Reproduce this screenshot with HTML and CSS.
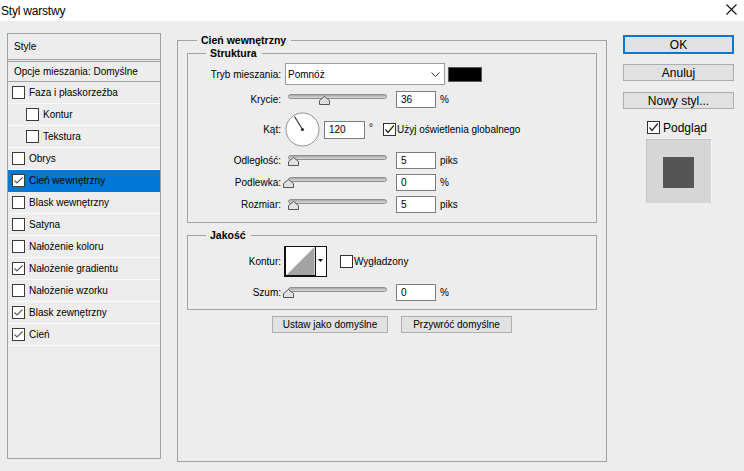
FILE: index.html
```html
<!DOCTYPE html>
<html lang="pl">
<head>
<meta charset="utf-8">
<title>Styl warstwy</title>
<link rel="stylesheet" href="styles.css">
</head>
<body>
<div class="titlebar">
  <span class="title">Styl warstwy</span>
  <svg class="close" width="11" height="11" viewBox="0 0 11 11"><path d="M0.5 0.5 L10.5 10.5 M10.5 0.5 L0.5 10.5" stroke="#111" stroke-width="1.1" fill="none"/></svg>
</div>
<div class="main">
  <aside class="styles-panel">
    <div class="sp-head">Style</div>
    <div class="sp-row sp-opts">Opcje mieszania: Domyślne</div>
    <div class="sp-row"><span class="cb"></span>Faza i płaskorzeźba</div>
    <div class="sp-row sub"><span class="cb"></span>Kontur</div>
    <div class="sp-row sub"><span class="cb"></span>Tekstura</div>
    <div class="sp-row"><span class="cb"></span>Obrys</div>
    <div class="sp-row sel"><span class="cb"><svg width="11" height="11" viewBox="0 0 11 11"><path d="M1.5 5.5 L4 8 L9.5 2.5" stroke="#5a5a5a" stroke-width="1.1" fill="none"/></svg></span>Cień wewnętrzny</div>
    <div class="sp-row"><span class="cb"></span>Blask wewnętrzny</div>
    <div class="sp-row"><span class="cb"></span>Satyna</div>
    <div class="sp-row"><span class="cb"></span>Nałożenie koloru</div>
    <div class="sp-row"><span class="cb"><svg width="11" height="11" viewBox="0 0 11 11"><path d="M1.5 5.5 L4 8 L9.5 2.5" stroke="#5a5a5a" stroke-width="1.1" fill="none"/></svg></span>Nałożenie gradientu</div>
    <div class="sp-row"><span class="cb"></span>Nałożenie wzorku</div>
    <div class="sp-row"><span class="cb"><svg width="11" height="11" viewBox="0 0 11 11"><path d="M1.5 5.5 L4 8 L9.5 2.5" stroke="#5a5a5a" stroke-width="1.1" fill="none"/></svg></span>Blask zewnętrzny</div>
    <div class="sp-row"><span class="cb"><svg width="11" height="11" viewBox="0 0 11 11"><path d="M1.5 5.5 L4 8 L9.5 2.5" stroke="#5a5a5a" stroke-width="1.1" fill="none"/></svg></span>Cień</div>
  </aside>

  <fieldset class="group outer">
    <legend>Cień wewnętrzny</legend>
    <fieldset class="group inner">
      <legend>Struktura</legend>
      <div class="row row-mode">
        <span class="lbl">Tryb mieszania:</span>
        <div class="select"><span>Pomnóż</span><svg width="9" height="5" viewBox="0 0 9 5"><path d="M0.5 0.5 L4.5 4.5 L8.5 0.5" stroke="#333" fill="none"/></svg></div>
        <span class="swatch"></span>
      </div>
      <div class="row">
        <span class="lbl">Krycie:</span>
        <div class="slider"><div class="track"></div><svg class="thumb" style="left:33.5px" width="11" height="9" viewBox="0 0 11 9"><path d="M5.5 0.5 L10.5 4.5 L10.5 8.5 L0.5 8.5 L0.5 4.5 Z" fill="#e2e2e2" stroke="#555"/></svg></div>
        <span class="num">36</span><span class="unit">%</span>
      </div>
      <div class="row row-angle">
        <span class="lbl">Kąt:</span>
        <svg class="dial" width="35" height="35" viewBox="0 0 35 35"><circle cx="17.5" cy="17.5" r="16.5" fill="#fff" stroke="#8f8f8f"/><path d="M17.5 17.5 L9.5 4.5" stroke="#333" stroke-width="1.2"/><circle cx="17.5" cy="17.5" r="1.6" fill="#333"/></svg>
        <span class="num wide">120</span><span class="deg">°</span>
        <span class="cb dark"><svg width="11" height="11" viewBox="0 0 11 11"><path d="M1.5 5.5 L4 8.5 L9.8 1.5" stroke="#222" stroke-width="1.2" fill="none"/></svg></span><span class="cbtext">Użyj oświetlenia globalnego</span>
      </div>
      <div class="row">
        <span class="lbl">Odległość:</span>
        <div class="slider"><div class="track"></div><svg class="thumb" style="left:2.5px" width="11" height="9" viewBox="0 0 11 9"><path d="M5.5 0.5 L10.5 4.5 L10.5 8.5 L0.5 8.5 L0.5 4.5 Z" fill="#e2e2e2" stroke="#555"/></svg></div>
        <span class="num">5</span><span class="unit">piks</span>
      </div>
      <div class="row">
        <span class="lbl">Podlewka:</span>
        <div class="slider"><div class="track"></div><svg class="thumb" style="left:-2.5px" width="11" height="9" viewBox="0 0 11 9"><path d="M5.5 0.5 L10.5 4.5 L10.5 8.5 L0.5 8.5 L0.5 4.5 Z" fill="#e2e2e2" stroke="#555"/></svg></div>
        <span class="num">0</span><span class="unit">%</span>
      </div>
      <div class="row">
        <span class="lbl">Rozmiar:</span>
        <div class="slider"><div class="track"></div><svg class="thumb" style="left:2.5px" width="11" height="9" viewBox="0 0 11 9"><path d="M5.5 0.5 L10.5 4.5 L10.5 8.5 L0.5 8.5 L0.5 4.5 Z" fill="#e2e2e2" stroke="#555"/></svg></div>
        <span class="num">5</span><span class="unit">piks</span>
      </div>
    </fieldset>

    <fieldset class="group inner quality">
      <legend>Jakość</legend>
      <div class="row row-contour">
        <span class="lbl">Kontur:</span>
        <svg class="contour" width="43" height="31" viewBox="0 0 43 31">
          <rect x="0.5" y="0.5" width="42" height="30" fill="#fff" stroke="#111"/>
          <path d="M1.5 30 L30.5 1 L30.5 30 Z" fill="#a3a3a3"/>
          <path d="M1.5 0 L1.5 31 M0 29.5 L31 29.5" stroke="#111"/>
          <path d="M31.5 0 L31.5 31" stroke="#111"/>
          <path d="M34 13 L39 13 L36.5 16 Z" fill="#111"/>
        </svg>
        <span class="cb dark"></span><span class="cbtext">Wygładzony</span>
      </div>
      <div class="row row-noise">
        <span class="lbl">Szum:</span>
        <div class="slider"><div class="track"></div><svg class="thumb" style="left:-2.5px" width="11" height="9" viewBox="0 0 11 9"><path d="M5.5 0.5 L10.5 4.5 L10.5 8.5 L0.5 8.5 L0.5 4.5 Z" fill="#e2e2e2" stroke="#555"/></svg></div>
        <span class="num">0</span><span class="unit">%</span>
      </div>
    </fieldset>

    <div class="btn-row">
      <button class="btn btn-set">Ustaw jako domyślne</button>
      <button class="btn btn-reset">Przywróć domyślne</button>
    </div>
  </fieldset>

  <div class="side">
    <button class="sbtn ok">OK</button>
    <button class="sbtn cancel">Anuluj</button>
    <button class="sbtn newstyle">Nowy styl...</button>
    <div class="preview-check">
      <span class="cb dark"><svg width="11" height="11" viewBox="0 0 11 11"><path d="M1.5 5.5 L4 8.5 L9.8 1.5" stroke="#222" stroke-width="1.2" fill="none"/></svg></span><span>Podgląd</span>
    </div>
    <div class="preview"><div class="preview-sq"></div></div>
  </div>
</div>
</body>
</html>
```

FILE: styles.css
```css
html, body {
  margin: 0;
  padding: 0;
}
body {
  width: 744px;
  height: 471px;
  overflow: hidden;
  background: #ededed;
  font-family: "Liberation Sans", Arial, sans-serif;
  font-size: 10px;
  color: #000;
}

.titlebar {
  height: 21px;
  background: #fff;
  display: flex;
  align-items: center;
  justify-content: space-between;
  padding: 0 7px 0 1px;
  font-size: 12px;
  letter-spacing: -0.2px;
}
.close {
  display: block;
  margin-top: -2px;
}

.main {
  display: flex;
  align-items: flex-start;
  padding-left: 7px;
}

/* left list */
.styles-panel {
  width: 154px;
  height: 426px;
  margin-top: 12px;
  box-sizing: border-box;
  border: 1px solid #a0a0a0;
  flex: none;
}
.sp-head {
  height: 25px;
  line-height: 25px;
  padding-left: 6px;
  border-bottom: 3px double #a0a0a0;
}
.sp-row {
  height: 21px;
  display: flex;
  align-items: center;
  gap: 4px;
  padding-left: 4px;
  border-bottom: 1px solid #fbfbfb;
  white-space: nowrap;
}
.sp-row.sub {
  padding-left: 18px;
}
.sp-row.sp-opts {
  height: 19px;
  padding-left: 6px;
  border-bottom-color: #a0a0a0;
}
.sp-row.sel {
  background: #0078d7;
  border-bottom-color: #0078d7;
}

.cb {
  width: 13px;
  height: 13px;
  box-sizing: border-box;
  border: 1px solid #3a3a3a;
  background: #fff;
  flex: none;
  display: flex;
  align-items: center;
  justify-content: center;
}
.cb svg {
  display: block;
}

/* group boxes */
.group {
  margin: 0;
  padding: 0;
  min-width: 0;
  border: 1px solid #a3a3a3;
}
.group > legend {
  padding: 0 5px 0 4px;
  font-weight: bold;
  font-size: 10.5px;
  line-height: 13px;
}
.outer {
  width: 430px;
  height: 428px;
  box-sizing: border-box;
  margin: 13px 0 0 16px;
  padding: 0 9px;
  flex: none;
}
.outer > legend {
  margin-left: 10px;
}
.inner {
  padding: 3px 0 7px;
}
.inner > legend {
  margin-left: 18px;
}
.quality {
  margin-top: 6px;
  padding: 4px 0 6px;
}

.row {
  display: flex;
  align-items: center;
  height: 22px;
  white-space: nowrap;
}
.row-mode {
  margin-bottom: 3px;
}
.row-angle {
  height: 39px;
}
.row-contour {
  height: 31px;
}
.row-noise {
  margin-top: 4px;
}
.lbl {
  width: 93px;
  margin-right: 4px;
  text-align: right;
  flex: none;
}

.select {
  width: 160px;
  height: 22px;
  box-sizing: border-box;
  border: 1px solid #9c9c9c;
  background: #fff;
  display: flex;
  align-items: center;
  justify-content: space-between;
  padding: 0 4px 0 2px;
}
.select svg {
  display: block;
}
.swatch {
  width: 34px;
  height: 15px;
  box-sizing: border-box;
  background: #000;
  border: 1px solid #5a5a5a;
  margin-left: 3px;
}

.slider {
  position: relative;
  width: 103px;
  height: 17px;
  margin-right: 8px;
  flex: none;
}
.track {
  margin: 3px 0 0 3px;
  width: 99px;
  height: 5px;
  box-sizing: border-box;
  border: 1px solid #8e8e8e;
  border-radius: 3px;
  background: linear-gradient(#a8a8a8, #dadada);
}
.thumb {
  position: absolute;
  top: 5px;
  display: block;
}

.num {
  width: 40px;
  height: 17px;
  box-sizing: border-box;
  border: 1px solid #7d7d7d;
  background: #fff;
  padding-left: 4px;
  display: flex;
  align-items: center;
  flex: none;
}
.num.wide {
  width: 41px;
  height: 18px;
}
.unit {
  margin-left: 4px;
}

.dial {
  display: block;
  margin-right: 4px;
  flex: none;
}
.deg {
  margin-left: 4px;
  margin-right: 10px;
  align-self: flex-start;
  margin-top: 12px;
}
.cbtext {
  margin-left: 1px;
}
.cb.dark {
  border-color: #333;
}

.contour {
  display: block;
  margin-left: -1px;
  margin-right: 13px;
  flex: none;
}

.btn-row {
  display: flex;
  justify-content: center;
  gap: 13px;
  margin-top: 6px;
}
.btn {
  height: 17px;
  box-sizing: border-box;
  border: 1px solid #adadad;
  background: #e1e1e1;
  font: inherit;
  color: #000;
  padding: 0;
  margin: 0;
}
.btn-set {
  width: 116px;
}
.btn-reset {
  width: 111px;
}

/* right column */
.side {
  width: 111px;
  margin: 14px 0 0 16px;
  display: flex;
  flex-direction: column;
  flex: none;
}
.sbtn {
  height: 17px;
  box-sizing: border-box;
  border: 1px solid #adadad;
  background: #e1e1e1;
  font-family: inherit;
  font-size: 12px;
  color: #000;
  padding: 0;
  margin: 0;
  display: flex;
  align-items: center;
  justify-content: center;
}
.sbtn.ok {
  height: 19px;
  border: 2px solid #0078d7;
}
.sbtn.cancel {
  margin-top: 10px;
}
.sbtn.newstyle {
  margin-top: 11px;
}
.preview-check {
  display: flex;
  align-items: center;
  gap: 3px;
  margin-top: 12px;
  padding-left: 24px;
  height: 13px;
  font-size: 12px;
}
.preview {
  margin: 5px 0 0 23px;
  width: 66px;
  height: 64px;
  box-sizing: border-box;
  background: #d6d6d6;
  border: 1px solid #c4c4c4;
  border-right-color: #f4f4f4;
  border-bottom-color: #d6d6d6;
  padding: 17px 0 0 16px;
}
.preview-sq {
  width: 31px;
  height: 31px;
  background: #555;
}
```
